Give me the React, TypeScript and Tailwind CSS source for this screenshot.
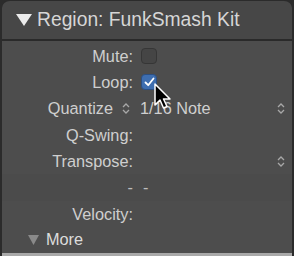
import React from 'react';

const font = { fontFamily: '"Liberation Sans", Arial, sans-serif' };

function UpDown({ className = '' }: { className?: string }) {
  return (
    <svg width="8" height="13" viewBox="0 0 8 13" className={className}>
      <path d="M1 5 L4 2 L7 5 M1 8 L4 11 L7 8" fill="none" stroke="#a8a8a8" strokeWidth="1.3" />
    </svg>
  );
}

function Checkbox({ checked }: { checked?: boolean }) {
  if (checked) {
    return (
      <div className="w-[16px] h-[16px] rounded-[4px] bg-[#3e6eb0] border border-[#2c4f82] flex items-center justify-center">
        <svg width="11" height="10" viewBox="0 0 11 10">
          <path d="M1.5 5.5 L4.2 8.2 L9.5 1.5" fill="none" stroke="#ffffff" strokeWidth="1.8" strokeLinecap="round" strokeLinejoin="round" />
        </svg>
      </div>
    );
  }
  return <div className="w-[16px] h-[16px] rounded-[4px] bg-[#454545] border border-[#363636]" />;
}

function Row({ label, children }: { label?: React.ReactNode; children?: React.ReactNode }) {
  return (
    <div className="h-[26px] flex items-center">
      <div className="w-[131px] text-right shrink-0">{label}</div>
      <div className="flex-1 flex items-center pl-[8px] pr-[8px]">{children}</div>
    </div>
  );
}

export default function App() {
  return (
    <div className="w-[294px] h-[256px] bg-[#2b2b2b] relative" style={font}>
      <div className="h-[253px] mx-[2px] flex flex-col rounded-t-[8px] overflow-hidden border-t border-[#2b2b2b]">
        <div className="h-[40px] bg-[#474747] flex items-center pl-[14px] text-[#d6d6d6] text-[19.3px] border-b-2 border-[#2a2a2a] shrink-0">
          <svg width="16" height="12" viewBox="0 0 16 12" className="mr-[5px]">
            <path d="M0 0 L16 0 L8 12 Z" fill="#ebebeb" />
          </svg>
          Region: FunkSmash Kit
        </div>
        <div className="flex-1 bg-[#4d4d4d] text-[#cfcfcf] text-[16.3px] pt-[2px]">
          <Row label="Mute:">
            <Checkbox />
          </Row>
          <Row label="Loop:">
            <Checkbox checked />
          </Row>
          <div className="h-[27px] flex items-center">
            <div className="w-[131px] shrink-0 flex items-center justify-end pr-[3px]">
              <span>Quantize</span>
              <UpDown className="ml-[9px]" />
            </div>
            <div className="flex-1 flex items-center justify-between pl-[7px] pr-[7px]">
              <span>1/16 Note</span>
              <UpDown />
            </div>
          </div>
          <Row label="Q-Swing:" />
          <Row label="Transpose:">
            <div className="flex-1" />
            <UpDown className="mr-[-1px]" />
          </Row>
          <div className="h-[27px] flex items-center bg-[#4b4b4b]">
            <div className="w-[131px] shrink-0 flex justify-end">
              <span className="text-[#bdbdbd]">-</span>
            </div>
            <span className="ml-[10px] text-[#bdbdbd]">-</span>
          </div>
          <Row label="Velocity:" />
          <div className="h-[25px] flex items-center pl-[26px]">
            <svg width="11" height="10" viewBox="0 0 11 10" className="mr-[7px]">
              <path d="M0 0 L11 0 L5.5 10 Z" fill="#8a8a8a" />
            </svg>
            <span className="text-[#dcdcdc]">More</span>
          </div>
        </div>
      </div>
      <div className="h-[3px] mx-[2px] bg-[#a9a9a9]" />
      <svg className="absolute left-[154px] top-[83px]" width="20" height="30" viewBox="0 0 20 30">
        <path d="M1 1 L1 22 L6 17 L9.5 25 L13 23.5 L9.5 16 L16 16 Z" fill="#000" stroke="#fff" strokeWidth="1.5" strokeLinejoin="round" />
      </svg>
    </div>
  );
}
